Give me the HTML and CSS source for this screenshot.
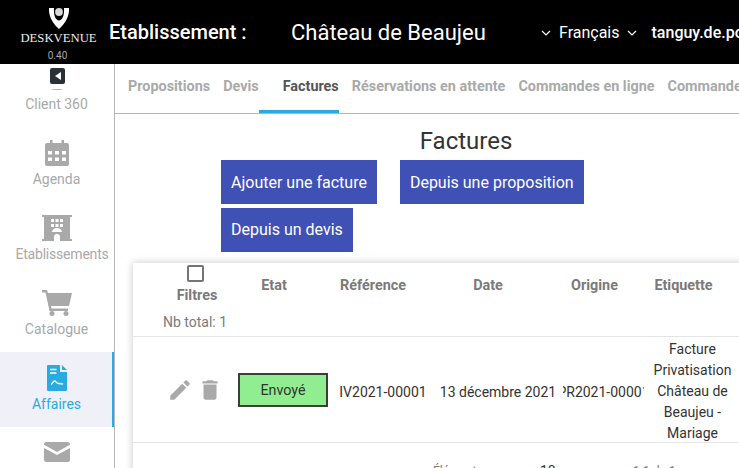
FILE: index.html
```html
<!DOCTYPE html>
<html lang="fr">
<head>
<meta charset="utf-8">
<title>Factures</title>
<link rel="stylesheet" href="styles.css">
</head>
<body>
<header class="topbar">
  <div class="brand">
    <svg class="brand-mark" viewBox="0 0 20 21" width="20" height="21"><circle cx="10" cy="4" r="3.900" fill="#d8d8d8"/><path d="M0 0H5C4.500 7 6.500 12.500 10 12.500S15.500 7 15 0H20C20.500 8 16.500 15 10 21 3.500 15-.5 8 0 0z" fill="#fff"/></svg>
    <div class="brand-name">DESKVENUE</div>
    <div class="brand-version">0.40</div>
  </div>
  <div class="estab-label">Etablissement :</div>
  <div class="estab-name">Château de Beaujeu</div>
  <svg class="chev" viewBox="0 0 10 6" width="10" height="6"><path d="M1 1l4 4 4-4" fill="none" stroke="#fff" stroke-width="1.200"/></svg>
  <div class="lang">Français</div>
  <svg class="chev" viewBox="0 0 10 6" width="10" height="6"><path d="M1 1l4 4 4-4" fill="none" stroke="#fff" stroke-width="1.200"/></svg>
  <div class="user">tanguy.de.pontevès</div>
</header>
<div class="body-row">
  <aside class="sidebar">
    <div class="side-inner">
      <div class="side-item">
        <svg class="side-icon" viewBox="0 0 30 26" width="30" height="26"><path d="M8 25c3-1.500 11-1.500 14 0z" fill="#b5b5b5"/></svg>
        <span>Client 360</span>
      </div>
      <div class="side-item">
        <svg class="side-icon" viewBox="0 0 24 26" width="24" height="26"><path fill="#a9a9a9" fill-rule="evenodd" d="M5 0h2.500v3h9V0H19v3h3a2 2 0 0 1 2 2v19a2 2 0 0 1-2 2H2a2 2 0 0 1-2-2V5a2 2 0 0 1 2-2h3zM3 11v3.500h4V11zm7 0v3.500h4V11zm7 0v3.500h4V11zM3 17.500V21h4v-3.500zm7 0V21h4v-3.500zm7 0V21h4v-3.500z"/></svg>
        <span>Agenda</span>
      </div>
      <div class="side-item">
        <svg class="side-icon" viewBox="0 0 30 26" width="30" height="26"><path fill="#a9a9a9" fill-rule="evenodd" d="M0 0h30v2h-2v22h2v2H18v-4a3 3 0 0 0-6 0v4H0v-2h2V2H0zM9 4v3h3V4zm4.500 0v3h3V4zM18 4v3h3V4zM9 9v3h3V9zm4.500 0v3h3V9zM18 9v3h3V9zM15 13c-3 0-5 2-5 4h10c0-2-2-4-5-4z"/></svg>
        <span class="side-label-wide">Etablissements</span>
      </div>
      <div class="side-item">
        <svg class="side-icon" viewBox="0 0 30 26" width="30" height="26"><path fill="#a9a9a9" d="M0 0h5l1 3h24l-3 13H9l.6 2.500H26V21H7.500L3.500 2.500H0z"/><circle cx="10" cy="23.500" r="2.500" fill="#a9a9a9"/><circle cx="24" cy="23.500" r="2.500" fill="#a9a9a9"/></svg>
        <span>Catalogue</span>
      </div>
      <div class="side-item is-active">
        <svg class="side-icon" viewBox="0 0 20 26" width="20" height="26"><path fill="#29abe2" d="M1 0h12v7h7v18a1 1 0 0 1-1 1H1a1 1 0 0 1-1-1V1a1 1 0 0 1 1-1zm14 0l5 5h-5z"/><path fill="none" stroke="#fff" stroke-width="1.300" d="M3 4.500h6.500M3 8h6.500M4 19.500c1.500-.5 2-3.500 3.500-3.500S9.500 18.500 11.500 18.500c1.500 0 3 0 4.500.7"/></svg>
        <span>Affaires</span>
      </div>
      <div class="side-item">
        <svg class="side-icon" viewBox="0 -2 26 26" width="26" height="26"><path fill="#a9a9a9" d="M2.500 0h21A2.500 2.500 0 0 1 26 2.500v.3L13 10 0 2.800v-.3A2.500 2.500 0 0 1 2.500 0zM0 6l13 7 13-7v11.500a2.500 2.500 0 0 1-2.500 2.500h-21A2.500 2.500 0 0 1 0 17.500z"/></svg>
        <span>Messages</span>
      </div>
    </div>
    <div class="collapse-btn"><svg viewBox="0 0 6 8" width="6" height="8"><path d="M6 0v8L0 4z" fill="#fff"/></svg></div>
  </aside>
  <main class="main">
    <nav class="tabs">
      <a class="tab">Propositions</a>
      <a class="tab tab-before-current">Devis</a>
      <a class="tab is-current">Factures</a>
      <a class="tab">Réservations en attente</a>
      <a class="tab">Commandes en ligne</a>
      <a class="tab">Commandes</a>
    </nav>
    <h1 class="page-title">Factures</h1>
    <div class="actions">
      <button class="btn">Ajouter une facture</button>
      <button class="btn">Depuis une proposition</button>
      <button class="btn">Depuis un devis</button>
    </div>
    <section class="card">
      <div class="row row-head">
        <div class="cell-filter">
          <span class="checkbox"></span>
          <span class="filter-label">Filtres</span>
          <span class="total">Nb total: 1</span>
        </div>
        <div class="th">Etat</div>
        <div class="th">Référence</div>
        <div class="th">Date</div>
        <div class="th">Origine</div>
        <div class="th">Etiquette</div>
      </div>
      <div class="row row-data">
        <div class="cell-tools">
          <svg viewBox="0 0 24 24" width="26" height="26"><path fill="#a9a9a9" d="M3 17.250V21h3.750L17.810 9.940l-3.750-3.750L3 17.250zM20.710 7.040a1 1 0 0 0 0-1.410l-2.340-2.340a1 1 0 0 0-1.410 0l-1.830 1.830 3.750 3.750 1.830-1.830z"/></svg>
          <svg viewBox="0 0 24 24" width="26" height="26"><path fill="#a9a9a9" d="M6 19c0 1.100.9 2 2 2h8c1.100 0 2-.9 2-2V7H6v12zM19 4h-3.500l-1-1h-5l-1 1H5v2h14V4z"/></svg>
        </div>
        <div class="td-status"><span class="status">Envoyé</span></div>
        <div class="td td-shift">IV2021-00001</div>
        <div class="td td-shift td-nowrap">13 décembre 2021</div>
        <div class="td td-clip"><span>PR2021-00001</span></div>
        <div class="td td-label">Facture Privatisation Château de Beaujeu - Mariage</div>
      </div>
      <div class="pager">
        <span class="pager-label">Éléments par page :</span>
        <span class="pager-size">10</span>
        <span class="pager-range">1-1 de 1</span>
        <svg class="pager-arrow" viewBox="0 0 24 24" width="24" height="24"><path fill="#a0a0a0" d="M15.410 7.410L14 6l-6 6 6 6 1.410-1.410L10.830 12z"/></svg>
      </div>
    </section>
  </main>
</div>
</body>
</html>
```
FILE: styles.css
```css
* { box-sizing: border-box; }
html, body { margin: 0; height: 100%; overflow: hidden; }
body { font-family: Roboto, "Liberation Sans", sans-serif; background: #fff; color: #333; width: 739px; height: 468px; }

.topbar { height: 64px; background: #000; color: #fff; display: flex; align-items: center; white-space: nowrap; overflow: hidden; }
.brand { width: 109px; flex: none; display: flex; flex-direction: column; align-items: center; padding-top: 8px; padding-left: 8px; height: 64px; }
.brand-mark { display: block; }
.brand-name { font-family: "Liberation Serif", serif; font-size: 12.700px; line-height: 14px; margin-top: 2px; color: #eee; }
.brand-version { font-size: 10px; line-height: 12px; margin-top: 5px; margin-right: 2px; color: #aaa; }
.estab-label { font-size: 20px; font-weight: 500; width: 182px; flex: none; }
.estab-name { font-size: 22px; width: 250px; flex: none; }
.chev { flex: none; margin-top: 1px; }
.lang { font-size: 16px; margin: 0 7px 0 8px; }
.user { font-size: 16px; font-weight: 500; margin-left: 15px; }

.body-row { display: flex; height: 404px; }
.sidebar { width: 115px; flex: none; border-right: 1px solid #b5b5b5; position: relative; overflow: hidden; }
.side-inner { margin-top: -12px; }
.side-item { height: 75px; display: flex; flex-direction: column; align-items: center; padding: 13px 1px 0 0; font-size: 14px; line-height: 16px; color: #a9a9a9; gap: 5px; }
.side-icon { display: block; flex: none; }
.side-label-wide { margin-left: 11px; letter-spacing: -.2px; }
.side-item.is-active { background: #f0f1f8; color: #29abe2; box-shadow: inset -2px 0 0 #29abe2; }
.collapse-btn { position: absolute; left: 50px; top: 4px; width: 15px; height: 16px; background: #2b2f36; border-radius: 2px; display: flex; align-items: center; justify-content: center; }

.main { flex: 1; min-width: 0; overflow: hidden; }
.tabs { height: 50px; border-bottom: 1px solid #b5b5b5; display: flex; white-space: nowrap; padding-left: 13px; }
.tab { font-size: 14.400px; font-weight: 700; color: #a9a9a9; padding-top: 15px; margin-right: 13px; height: 49px; flex: none; line-height: 16px; }
.tab-before-current { margin-right: 0; }
.tab.is-current { color: #555; border-bottom: 3px solid #29abe2; padding-left: 24px; }
.page-title { font-size: 24px; font-weight: 400; line-height: 28px; margin: 13px 0 0 106px; width: 490px; text-align: center; color: #333; }
.actions { margin: 5px 0 0 106px; width: 490px; display: flex; flex-wrap: wrap; column-gap: 23px; row-gap: 3.600px; }
.btn { height: 44px; background: #3f51b5; color: #fff; border: 0; font: 400 16px Roboto, sans-serif; padding: 0 10px; }

.card { margin: 11px 0 0 18px; width: 660px; background: #fff; box-shadow: 0 0 8px rgba(0,0,0,.22); }
.row { display: grid; grid-template-columns: 100px 100px 98px 132px 81px 97px; border-bottom: 1px solid #e4e4e4; }
.row-head { height: 74px; }
.cell-filter { display: flex; flex-direction: column; align-items: center; font-size: 14px; color: #7a7a7a; padding-top: 2px; margin-left: 24px; }
.checkbox { width: 17px; height: 17px; border: 2px solid #757575; border-radius: 2px; margin-bottom: 5px; }
.filter-label { font-size: 14.400px; font-weight: 700; line-height: 18px; margin-left: 4px; }
.total { line-height: 16px; margin-top: 9px; white-space: nowrap; }
.th { font-size: 14.400px; font-weight: 700; color: #7a7a7a; text-align: center; padding: 15px 18px 0 0; line-height: 16px; }
.row-data { height: 106px; align-items: center; font-size: 14px; color: #333; }
.cell-tools { display: flex; justify-content: flex-end; padding-right: 10px; gap: 4px; }
.td { text-align: center; padding-top: 3px; }
.td-shift { padding-left: 2px; }
.td-status { text-align: center; }
.td-nowrap { white-space: nowrap; }
.td-clip { overflow: hidden; white-space: nowrap; display: flex; justify-content: center; }
.td-clip span { flex: none; }
.td-label { line-height: 21px; padding-top: 2px; }
.status { display: block; width: 90px; height: 34px; margin: 0 auto; background: #90ee90; border: 2px solid #3d3d3d; line-height: 30px; font-size: 14.300px; color: #333; }
.pager { height: 40px; font-size: 12px; color: #757575; position: relative; }
.pager-label { position: absolute; left: 300px; top: 21px; }
.pager-size { position: absolute; left: 407px; top: 20px; font-size: 14px; color: #333; }
.pager-range { position: absolute; left: 500px; top: 21px; }
.pager-arrow { position: absolute; left: 592px; top: 20px; }
```
